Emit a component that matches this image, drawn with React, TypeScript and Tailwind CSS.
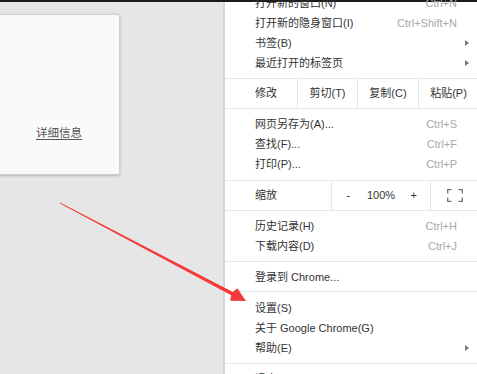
import React from 'react';

const font = "font-['Liberation_Sans','Noto_Sans_CJK_SC',sans-serif]";

function Item({ label, shortcut, sub, className = '' }: { label: string; shortcut?: string; sub?: boolean; className?: string }) {
  return (
    <div className={`flex h-5 shrink-0 items-center pl-[30px] ${className}`}>
      <span className="flex-1 whitespace-nowrap text-[#333]">{label}</span>
      {shortcut && <span className="mr-[21px] whitespace-nowrap text-[#a8a8a8]">{shortcut}</span>}
      {sub && <span className="mr-[9px] h-0 w-0 border-y-[3.5px] border-l-[4px] border-y-transparent border-l-[#777]" />}
    </div>
  );
}

function Sep({ className = '' }: { className?: string }) {
  return <div className={`h-px shrink-0 bg-[#e9e9e9] ${className}`} />;
}

function FullscreenIcon() {
  return (
    <svg width="16" height="13" viewBox="0 0 16 13" fill="none" stroke="#707070" strokeWidth="1.3">
      <path d="M0.7 4.5V0.7H4.5" />
      <path d="M11.5 0.7H15.3V4.5" />
      <path d="M15.3 8.5V12.3H11.5" />
      <path d="M4.5 12.3H0.7V8.5" />
    </svg>
  );
}

export default function App() {
  return (
    <div className={`relative flex h-[374px] w-[477px] flex-col overflow-hidden bg-[#e6e6e6] text-[11px] ${font}`}>
      <div className="h-[2px] shrink-0 bg-[#1c1c1c]" />

      <div className="flex min-h-0 flex-1">
        {/* page behind the menu */}
        <div className="w-[223px] shrink-0">
          <div className="ml-[-8px] mt-[12px] flex h-[161px] w-[128px] flex-col rounded-[2px] border border-[#d0d0d0] bg-[#fafafa] shadow-[0_1px_3px_rgba(0,0,0,0.22)]">
            <span className="mt-auto mb-[32px] pl-[43px] text-[11.5px] text-[#555] underline underline-offset-2">详细信息</span>
          </div>
        </div>

        {/* chrome menu */}
        <div className="flex w-[255px] shrink-0 flex-col border-l-2 border-[#d6d6d6] bg-white">
          <div className="mt-[-9px] flex flex-col">
            <Item label="打开新的窗口(N)" shortcut="Ctrl+N" />
            <Item label="打开新的隐身窗口(I)" shortcut="Ctrl+Shift+N" />
            <Item label="书签(B)" sub />
            <Item label="最近打开的标签页" sub />
            <Sep className="mt-[5px]" />
            <div className="flex h-[29px] shrink-0 items-center text-[#333]">
              <span className="w-[72px] pl-[30px]">修改</span>
              <span className="flex h-full w-[60px] items-center justify-center border-l border-[#e6e6e6]">剪切(T)</span>
              <span className="flex h-full w-[61px] items-center justify-center border-l border-[#e6e6e6]">复制(C)</span>
              <span className="flex h-full w-[60px] items-center justify-center border-l border-[#e6e6e6]">粘贴(P)</span>
            </div>
            <Sep />
            <Item label="网页另存为(A)..." shortcut="Ctrl+S" className="mt-[5px]" />
            <Item label="查找(F)..." shortcut="Ctrl+F" />
            <Item label="打印(P)..." shortcut="Ctrl+P" />
            <Sep className="mt-[6px]" />
            <div className="flex h-[29px] shrink-0 items-center text-[#333]">
              <span className="w-[106px] pl-[30px]">缩放</span>
              <div className="flex h-full w-[99px] items-center border-l border-[#e6e6e6]">
                <span className="w-[33px] text-center">-</span>
                <span className="w-[33px] text-center">100%</span>
                <span className="w-[33px] text-center">+</span>
              </div>
              <div className="flex h-full w-[48px] items-center justify-center border-l border-[#e6e6e6]">
                <FullscreenIcon />
              </div>
            </div>
            <Sep />
            <Item label="历史记录(H)" shortcut="Ctrl+H" className="mt-[5px]" />
            <Item label="下载内容(D)" shortcut="Ctrl+J" />
            <Sep className="mt-[5px]" />
            <Item label="登录到 Chrome..." className="mt-[5px]" />
            <Sep className="mt-[4px]" />
            <Item label="设置(S)" className="mt-[6px]" />
            <Item label="关于 Google Chrome(G)" />
            <Item label="帮助(E)" sub />
            <Sep className="mt-[5px]" />
            <Item label="退出(X)" className="mt-[5px]" />
          </div>
        </div>
      </div>

      {/* red annotation arrow */}
      <svg className="pointer-events-none absolute left-0 top-0" width="477" height="374" viewBox="0 0 477 374">
        <polygon
          points="60,202.6 232.8,292 237.3,288.3 246,301 230,300.7 231.2,295.2 60,203.4"
          fill="#f43a3a"
        />
      </svg>
    </div>
  );
}
